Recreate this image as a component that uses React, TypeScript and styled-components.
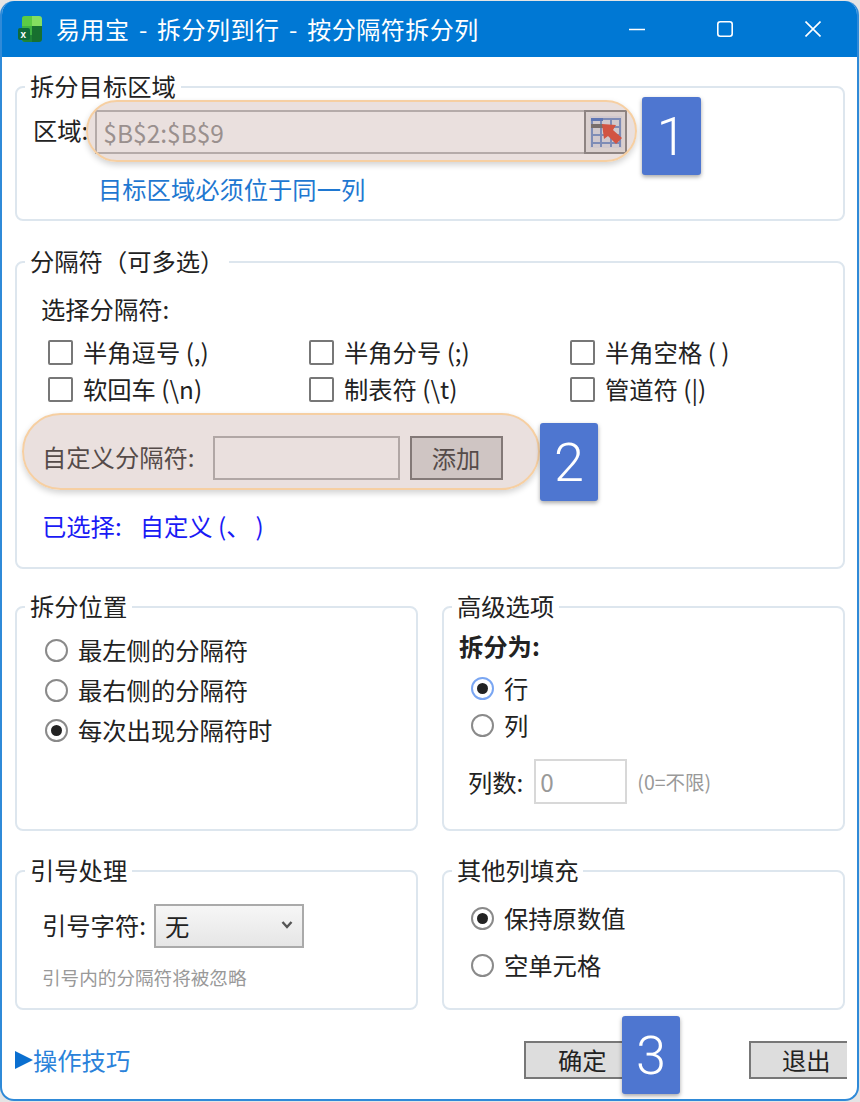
import React from 'react';
import styled, { createGlobalStyle } from 'styled-components';

const FONT = '"Noto Sans CJK SC", "Noto Sans", sans-serif';

const GlobalStyle = createGlobalStyle`
  html, body {
    margin: 0;
    padding: 0;
    background: #e4e4e4;
    font-family: ${FONT};
  }
  * {
    box-sizing: border-box;
  }
`;

const ExcelIcon = () => (
  <svg width="26" height="28" viewBox="0 0 26 28">
    <defs>
      <clipPath id="sheet">
        <rect x="5" y="1" width="20" height="26" rx="3" />
      </clipPath>
    </defs>
    <g clipPath="url(#sheet)">
      <rect x="5" y="1" width="10" height="26" fill="#3fb343" />
      <rect x="5" y="1" width="10" height="10" fill="#5ccb45" />
      <rect x="15" y="1" width="10" height="10" fill="#84de60" />
      <rect x="15" y="11" width="10" height="16" fill="#17702f" />
      <rect x="5" y="20" width="10" height="7" fill="#1f8436" />
    </g>
    <rect x="1" y="13" width="12" height="12" rx="2" fill="#0f6b3a" />
    <text x="3.6" y="22.5" fontSize="10" fontWeight="700" fill="#fff" fontFamily="Liberation Sans">
      x
    </text>
  </svg>
);

const RangeIcon = () => (
  <svg width="34" height="34" viewBox="0 0 34 34">
    <rect x="1" y="1" width="32" height="32" fill="#d8dce6" />
    <g stroke="#5f82c4" strokeWidth="2">
      <path d="M2 4h30M2 12h30M2 20h30M2 28h30" />
      <path d="M3 4v28M12 4v28M22 4v28M31 4v28" />
    </g>
    <rect x="2" y="3" width="12" height="3" fill="#2f62c0" />
    <rect x="2" y="9" width="12" height="4" fill="#555" />
    <path d="M13 9l14 1-3 5 9 8-6 6-8-8-4 3z" fill="#dc2f18" />
  </svg>
);

const Page = styled.div`
  width: 860px;
  height: 1102px;
  padding-top: 1px;
`;

const Window = styled.div`
  width: 859px;
  height: 1100px;
  display: flex;
  flex-direction: column;
  background: #fff;
  border: 2px solid #2f8ad8;
  border-top: none;
  border-radius: 14px;
  overflow: hidden;
`;

const TitleBar = styled.div`
  height: 56px;
  flex: none;
  display: flex;
  align-items: center;
  padding-left: 15px;
  background: #0078d4;
  color: #fff;
`;

const Title = styled.div`
  margin-left: 13px;
  font-size: 24px;
  line-height: 32px;
  letter-spacing: 0.5px;
  word-spacing: 3.5px;
  white-space: nowrap;
`;

const WindowControls = styled.div`
  margin-left: auto;
  display: flex;
`;

const ControlButton = styled.div`
  width: 88px;
  height: 56px;
  display: flex;
  align-items: center;
  justify-content: center;
`;

const Content = styled.div`
  flex: 1;
  display: flex;
  flex-direction: column;
  padding: 14px 12px 0 13px;
`;

const Group = styled.fieldset<{ $height: number; $top?: number }>`
  height: ${(p) => p.$height}px;
  margin: ${(p) => p.$top ?? 0}px 0 0;
  padding: 0;
  min-width: 0;
  border: 2px solid #dde6ee;
  border-radius: 8px;
`;

const GroupTitle = styled.legend`
  margin-left: 8px;
  padding: 0 5px 2px;
  font-size: 24.3px;
  line-height: 30px;
  color: #222;
`;

const Label = styled.span<{ $size?: number; $color?: string }>`
  font-size: ${(p) => p.$size ?? 24.3}px;
  line-height: 32px;
  color: ${(p) => p.$color ?? '#222'};
  white-space: nowrap;
`;

const FieldRow = styled.div`
  position: relative;
  display: flex;
  align-items: center;
  margin: 7px 0 0 16px;
  width: 595px;
  height: 44px;
  ${Label} {
    padding-bottom: 4px;
  }
`;

const RangeInput = styled.input`
  width: 489px;
  height: 44px;
  margin-left: 7px;
  padding: 0 6px;
  border: 2px solid #b0b0b0;
  border-right: none;
  background: #fff;
  color: #888;
  font-family: ${FONT};
  font-size: 24.5px;
  outline: none;
`;

const RangeButton = styled.div`
  width: 43px;
  height: 44px;
  flex: none;
  display: flex;
  align-items: center;
  justify-content: center;
  border: 2px solid #777;
  background: #e8e8e8;
`;

const Note = styled.div`
  margin: 19px 0 0 81px;
  font-size: 24.3px;
  line-height: 32px;
  color: #1f78d1;
`;

const Highlight = styled.div<{ $left: number; $top: number; $width: number; $height: number }>`
  position: absolute;
  left: ${(p) => p.$left}px;
  top: ${(p) => p.$top}px;
  width: ${(p) => p.$width}px;
  height: ${(p) => p.$height}px;
  border: 2px solid #f6cfa2;
  border-radius: ${(p) => p.$height / 2}px;
  background: rgba(190, 160, 155, 0.33);
  box-shadow: 0 3px 6px rgba(0, 0, 0, 0.18);
`;

const Badge = styled.div<{ $left: number; $top: number; $width: number; $height: number }>`
  position: absolute;
  left: ${(p) => p.$left}px;
  top: ${(p) => p.$top}px;
  width: ${(p) => p.$width}px;
  height: ${(p) => p.$height}px;
  display: flex;
  align-items: center;
  justify-content: center;
  border-radius: 3px;
  background: #4e76d0;
  box-shadow: 0 2px 4px rgba(0, 0, 0, 0.35);
  color: #fff;
  font-family: Roboto, 'Liberation Sans', sans-serif;
  font-weight: 300;
  font-size: 54px;
  z-index: 2;
`;

const SeparatorBody = styled.div`
  padding: 15px 0 0 24px;
`;

const CheckGrid = styled.div`
  display: grid;
  grid-template-columns: repeat(3, 261px);
  row-gap: 5px;
  margin: 11px 0 0 7px;
`;

const CheckItem = styled.div`
  display: flex;
  align-items: center;
  height: 32px;
  gap: 10px;
`;

const CheckBox = styled.span`
  width: 25px;
  height: 25px;
  border: 2px solid #777;
  border-radius: 2px;
  background: #fff;
`;

const CustomRow = styled.div`
  position: relative;
  display: flex;
  align-items: center;
  width: 461px;
  height: 44px;
  margin: 31px 0 0 1px;
  ${Label} {
    padding-bottom: 2px;
  }
`;

const CustomInput = styled.input`
  width: 187px;
  height: 44px;
  margin-left: 18px;
  border: 2px solid #aaa;
  background: #fff;
  outline: none;
`;

const AddButton = styled.div`
  width: 93px;
  height: 44px;
  flex: none;
  margin-left: 10px;
  padding-bottom: 2px;
  display: flex;
  align-items: center;
  justify-content: center;
  border: 2px solid #666;
  background: #d7d7d7;
  font-size: 24.3px;
  color: #222;
`;

const Selected = styled.div`
  display: flex;
  gap: 18px;
  margin: 30px 0 0 1px;
  font-size: 24.3px;
  line-height: 32px;
  color: #1a1af5;
  text-spacing-trim: space-all;
`;

const Columns = styled.div`
  display: grid;
  grid-template-columns: 403px 403px;
  column-gap: 24px;
`;

const RadioList = styled.div<{ $gap: number; $left: number; $top: number }>`
  display: flex;
  flex-direction: column;
  gap: ${(p) => p.$gap}px;
  padding: ${(p) => p.$top}px 0 0 ${(p) => p.$left}px;
`;

const RadioRow = styled.div`
  display: flex;
  align-items: center;
  gap: 10px;
  height: 32px;
`;

const Radio = styled.span<{ $checked?: boolean; $focus?: boolean }>`
  width: 23px;
  height: 23px;
  flex: none;
  display: flex;
  align-items: center;
  justify-content: center;
  border: 2px solid ${(p) => (p.$focus ? '#7aa6f2' : '#8a8a8a')};
  border-radius: 50%;
  background: #fff;
  &::after {
    content: '';
    display: ${(p) => (p.$checked ? 'block' : 'none')};
    width: 11px;
    height: 11px;
    border-radius: 50%;
    background: #222;
  }
`;

const SplitHeading = styled.div`
  margin: 7px 0 0 15px;
  font-size: 24.3px;
  line-height: 32px;
  font-weight: 700;
  color: #222;
`;

const CountRow = styled.div`
  display: flex;
  align-items: center;
  margin: 18px 0 0 24px;
`;

const CountInput = styled.input`
  width: 93px;
  height: 45px;
  margin-left: 11px;
  padding: 0 4px;
  border: 2px solid #d8d8d8;
  color: #999;
  font-family: ${FONT};
  font-size: 24.3px;
  outline: none;
`;

const CountHint = styled.span`
  margin-left: 10px;
  font-size: 19.5px;
  color: #999;
`;

const QuoteRow = styled.div`
  display: flex;
  align-items: center;
  margin: 17px 0 0 25px;
  ${Label} {
    padding-bottom: 2px;
  }
`;

const SelectBox = styled.div`
  width: 150px;
  height: 44px;
  margin-left: 8px;
  padding: 0 9px 2px 9px;
  display: flex;
  align-items: center;
  justify-content: space-between;
  border: 2px solid #aaa;
  background: linear-gradient(#f6f6f6, #e6e6e6);
  font-size: 24.3px;
  color: #222;
`;

const QuoteHint = styled.div`
  margin: 15px 0 0 25px;
  font-size: 18.6px;
  line-height: 28px;
  color: #999;
`;

const Footer = styled.div`
  position: relative;
  display: flex;
  align-items: center;
  height: 38px;
  margin-top: 31px;
`;

const HelpLink = styled.div`
  flex: none;
  display: flex;
  align-items: center;
  font-size: 24.3px;
  line-height: 32px;
  color: #2a82da;
  white-space: nowrap;
`;

const HelpArrow = styled.span`
  width: 0;
  height: 0;
  border-left: 18px solid #0a6fd0;
  border-top: 9px solid transparent;
  border-bottom: 9px solid transparent;
`;

const DialogButton = styled.div<{ $width: number; $left: number; $open?: boolean }>`
  width: ${(p) => p.$width}px;
  height: 38px;
  flex: none;
  margin-left: ${(p) => p.$left}px;
  padding: 0 0 2px ${(p) => (p.$open ? 14 : 0)}px;
  display: flex;
  align-items: center;
  justify-content: center;
  border: 2px solid #777;
  border-right: ${(p) => (p.$open ? 'none' : '2px solid #777')};
  background: #ddd;
  font-size: 24.3px;
  color: #222;
`;

const App: React.FC = () => {
  const separators = ['半角逗号 (,)', '半角分号 (;)', '半角空格 ( )', '软回车 (\\n)', '制表符 (\\t)', '管道符 (|)'];

  return (
    <Page>
      <GlobalStyle />
      <Window>
        <TitleBar>
          <ExcelIcon />
          <Title>易用宝 - 拆分列到行 - 按分隔符拆分列</Title>
          <WindowControls>
            <ControlButton>
              <svg width="16" height="16" viewBox="0 0 16 16">
                <path d="M0 8.5h16" stroke="#fff" strokeWidth="1.6" />
              </svg>
            </ControlButton>
            <ControlButton>
              <svg width="16" height="16" viewBox="0 0 16 16" fill="none">
                <rect x="0.8" y="0.8" width="14.4" height="14.4" rx="2.5" stroke="#fff" strokeWidth="1.6" />
              </svg>
            </ControlButton>
            <ControlButton>
              <svg width="16" height="16" viewBox="0 0 16 16">
                <path d="M0.5 0.5l15 15M15.5 0.5l-15 15" stroke="#fff" strokeWidth="1.6" />
              </svg>
            </ControlButton>
          </WindowControls>
        </TitleBar>
        <Content>
          <Group $height={150}>
            <GroupTitle>拆分目标区域</GroupTitle>
            <FieldRow>
              <Label>区域:</Label>
              <RangeInput readOnly value="$B$2:$B$9" />
              <RangeButton>
                <RangeIcon />
              </RangeButton>
              <Highlight $left={53} $top={-10} $width={551} $height={62} />
              <Badge $left={609} $top={-13} $width={59} $height={78}>
                1
              </Badge>
            </FieldRow>
            <Note>目标区域必须位于同一列</Note>
          </Group>

          <Group $height={323} $top={25}>
            <GroupTitle>分隔符（可多选）</GroupTitle>
            <SeparatorBody>
              <Label>选择分隔符:</Label>
              <CheckGrid>
                {separators.map((text) => (
                  <CheckItem key={text}>
                    <CheckBox />
                    <Label>{text}</Label>
                  </CheckItem>
                ))}
              </CheckGrid>
              <CustomRow>
                <Label>自定义分隔符:</Label>
                <CustomInput readOnly />
                <AddButton>添加</AddButton>
                <Highlight $left={-20} $top={-23} $width={518} $height={77} />
                <Badge $left={498} $top={-13} $width={58} $height={78}>
                  2
                </Badge>
              </CustomRow>
              <Selected>
                <span>已选择:</span>
                <span>自定义 (、{'\u2009'})</span>
              </Selected>
            </SeparatorBody>
          </Group>

          <Columns>
            <Group $height={240} $top={22}>
              <GroupTitle>拆分位置</GroupTitle>
              <RadioList $gap={8} $left={28} $top={11}>
                <RadioRow>
                  <Radio />
                  <Label>最左侧的分隔符</Label>
                </RadioRow>
                <RadioRow>
                  <Radio />
                  <Label>最右侧的分隔符</Label>
                </RadioRow>
                <RadioRow>
                  <Radio $checked />
                  <Label>每次出现分隔符时</Label>
                </RadioRow>
              </RadioList>
            </Group>
            <Group $height={240} $top={22}>
              <GroupTitle>高级选项</GroupTitle>
              <SplitHeading>拆分为:</SplitHeading>
              <RadioList $gap={5} $left={27} $top={10}>
                <RadioRow>
                  <Radio $checked $focus />
                  <Label>行</Label>
                </RadioRow>
                <RadioRow>
                  <Radio />
                  <Label>列</Label>
                </RadioRow>
              </RadioList>
              <CountRow>
                <Label>列数:</Label>
                <CountInput readOnly value="0" />
                <CountHint>(0=不限)</CountHint>
              </CountRow>
            </Group>
          </Columns>

          <Columns>
            <Group $height={155} $top={24}>
              <GroupTitle>引号处理</GroupTitle>
              <QuoteRow>
                <Label>引号字符:</Label>
                <SelectBox>
                  <span>无</span>
                  <svg width="12" height="10" viewBox="0 0 12 10" fill="none">
                    <path d="M1.5 2l4.5 5 4.5-5" stroke="#555" strokeWidth="2.4" />
                  </svg>
                </SelectBox>
              </QuoteRow>
              <QuoteHint>引号内的分隔符将被忽略</QuoteHint>
            </Group>
            <Group $height={155} $top={24}>
              <GroupTitle>其他列填充</GroupTitle>
              <RadioList $gap={15} $left={27} $top={15}>
                <RadioRow>
                  <Radio $checked />
                  <Label>保持原数值</Label>
                </RadioRow>
                <RadioRow>
                  <Radio />
                  <Label>空单元格</Label>
                </RadioRow>
              </RadioList>
            </Group>
          </Columns>

          <Footer>
            <HelpLink>
              <HelpArrow />
              操作技巧
            </HelpLink>
            <DialogButton $width={116} $left={394}>
              确定
            </DialogButton>
            <DialogButton $width={98} $left={109} $open>
              退出
            </DialogButton>
            <Badge $left={607} $top={-25} $width={58} $height={78}>
              3
            </Badge>
          </Footer>
        </Content>
      </Window>
    </Page>
  );
};

export default App;
